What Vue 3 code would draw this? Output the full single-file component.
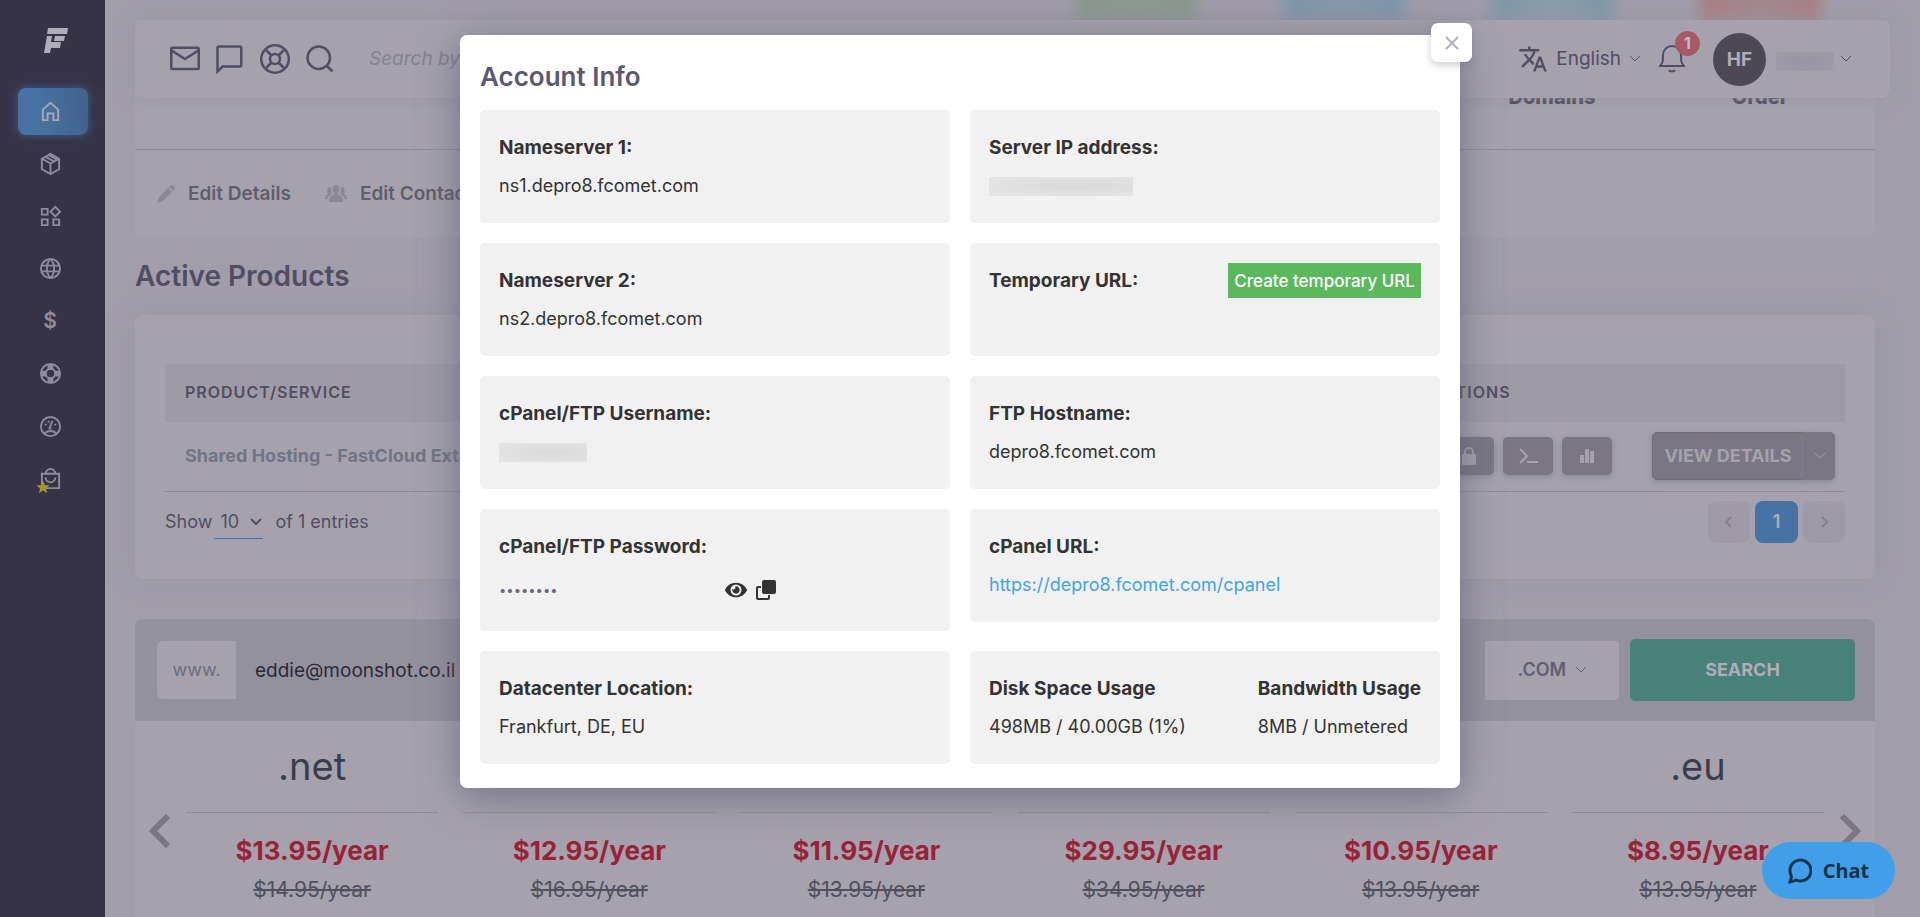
<template>
  <div class="app">
    <nav class="sidebar" aria-label="Main">
      <a href="#" class="logo" aria-label="Home page">
        <svg viewBox="0 0 24 25" width="24" height="25"><path d="M4 0h20l-1 6H3zM3 8h5l-1 6h10l-1 6H7l-1 5H0zM11 8h10l-1 5H10z"/></svg>
      </a>
      <ul>
        <li v-for="item in menu" :key="item.name">
          <a href="#" :class="{ active: item.name === 'home' }" :aria-label="item.name">
            <span v-if="item.sign" class="sign">{{ item.sign }}</span>
            <svg v-else viewBox="0 0 24 24" width="23" height="23"><path v-for="d in item.paths" :key="d" :d="d"/></svg>
            <svg v-if="item.star" class="star" viewBox="0 0 24 24" width="14" height="14"><path d="M12 1l3.200 7.500 8 .7-6 5.300 1.800 8L12 18l-7 4.500 1.800-8-6-5.300 8-.7z"/></svg>
          </a>
        </li>
      </ul>
    </nav>

    <header class="topbar">
      <div class="shortcuts">
        <button v-for="s in shortcuts" :key="s.name" :aria-label="s.name">
          <svg viewBox="0 0 24 24" width="30" height="30"><path v-for="d in s.paths" :key="d" :d="d"/></svg>
        </button>
      </div>
      <input class="search" type="text" placeholder="Search by" aria-label="Search" />
      <div class="user">
        <button class="lang">
          <svg class="translate" viewBox="0 0 24 24" width="30" height="30"><path d="M12.870 15.070l-2.540-2.510.03-.03c1.740-1.940 2.980-4.170 3.710-6.530H17V4h-7V2H8v2H1v1.990h11.170C11.500 7.920 10.440 9.750 9 11.350 8.070 10.320 7.300 9.190 6.690 8h-2c.73 1.630 1.730 3.170 2.980 4.560l-5.090 5.020L4 19l5-5 3.110 3.110.76-2.040zM18.500 10h-2L12 22h2l1.120-3h4.750L21 22h2l-4.500-12zm-2.620 7l1.620-4.330L19.120 17h-3.240z"/></svg>
          <span>English</span>
          <svg class="chev" viewBox="0 0 12 8" width="12" height="8"><path d="M1 1l5 5 5-5"/></svg>
        </button>
        <button class="bell" aria-label="Notifications">
          <svg viewBox="0 0 26 28" width="26" height="28"><path d="M1 21c3-3 3-5 3-11a9 9 0 0 1 18 0c0 6 0 8 3 11zM10 25c1 2 5 2 6 0"/></svg>
          <span class="badge">1</span>
        </button>
        <button class="account" aria-label="Account">
          <span class="avatar">HF</span>
          <span class="hidden-name"></span>
          <svg class="chev" viewBox="0 0 12 8" width="12" height="8"><path d="M1 1l5 5 5-5"/></svg>
        </button>
      </div>
    </header>

    <main>
      <section class="overview">
        <div class="stats">
          <div v-for="s in stats" :key="s.tone" class="stat">
            <span class="tile" :class="s.tone"></span>
            <strong>{{ s.label }}</strong>
          </div>
        </div>
        <div class="edit-links">
          <a href="#">
            <svg viewBox="0 0 18 18" width="18" height="18"><path d="M0 18l2-6 9-9 4 4-9 9zM12 2l2-2h2l2 2v2l-2 2z"/></svg>
            Edit Details
          </a>
          <a href="#">
            <svg viewBox="0 0 22 17" width="22" height="17"><path d="M11 0c5 0 4 8 1 9 4 1 6 3 6 8H4c0-5 2-7 6-8-3-1-4-9 1-9zM5 2c2 0 1 5 2 7-3 2-4 3-4 5H0c0-3 1-4 3-5-1-2-1-7 2-7zM17 2c-2 0-1 5-2 7 3 2 4 3 4 5h3c0-3-1-4-3-5 1-2 1-7-2-7z"/></svg>
            Edit Contacts
          </a>
        </div>
      </section>

      <h2>Active Products</h2>

      <section class="products">
        <table>
          <thead>
            <tr>
              <th>Product/Service</th>
              <th class="actions-col">Actions</th>
            </tr>
          </thead>
          <tbody>
            <tr>
              <td><a href="#">Shared Hosting - FastCloud Extra</a></td>
              <td class="actions-col">
                <div class="actions">
                  <button class="tool" aria-label="Password">
                    <svg viewBox="0 0 16 18" width="16" height="18"><path d="M2 7h12l1 1v9l-1 1H2l-1-1V8z"/><path class="line" d="M4 8V5a4 4 0 0 1 8 0v3"/></svg>
                  </button>
                  <button class="tool" aria-label="Terminal">
                    <svg viewBox="0 0 20 16" width="20" height="16"><path class="line" d="M2 1l7 7-7 7M9 14h11"/></svg>
                  </button>
                  <button class="tool" aria-label="Statistics">
                    <svg viewBox="0 0 16 16" width="16" height="16"><path d="M1 7h4v8H1zM6 1h4v14H6zM11 3h4v12h-4z"/></svg>
                  </button>
                  <button class="details">VIEW DETAILS</button>
                  <button class="more" aria-label="More actions">
                    <svg viewBox="0 0 12 8" width="12" height="8"><path d="M1 1l5 5 5-5"/></svg>
                  </button>
                </div>
              </td>
            </tr>
          </tbody>
        </table>
        <div class="paging">
          <label class="entries">
            Show
            <span class="select-wrap">
              <select v-model="pageSize"><option>10</option><option>25</option></select>
              <svg viewBox="0 0 12 8" width="12" height="8"><path d="M1 1l5 5 5-5"/></svg>
            </span>
          </label>
          <span class="total">of 1 entries</span>
          <div class="pages">
            <button aria-label="Previous"><svg viewBox="0 0 8 12" width="8" height="12"><path d="M6 1L1 6l5 5"/></svg></button>
            <button class="current">1</button>
            <button aria-label="Next"><svg viewBox="0 0 8 12" width="8" height="12"><path d="M2 1l5 5-5 5"/></svg></button>
          </div>
        </div>
      </section>

      <section class="domains">
        <form class="domain-search" @submit.prevent>
          <label class="www" for="domain">www.</label>
          <input id="domain" v-model="domain" type="text" />
          <div class="tld">
            <select v-model="tld" aria-label="Extension"><option>.COM</option><option>.NET</option></select>
            <svg viewBox="0 0 12 8" width="12" height="8"><path d="M1 1l5 5 5-5"/></svg>
          </div>
          <button type="submit">SEARCH</button>
        </form>
        <div class="carousel">
          <button aria-label="Previous"><svg viewBox="0 0 22 36" width="22" height="36"><path d="M19 3L4 18l15 15"/></svg></button>
          <ul>
            <li v-for="p in prices" :key="p.now">
              <h3>{{ p.ext }}</h3>
              <strong>{{ p.now }}/year</strong>
              <del>{{ p.old }}/year</del>
            </li>
          </ul>
          <button aria-label="Next"><svg viewBox="0 0 22 36" width="22" height="36"><path d="M3 3l15 15L3 33"/></svg></button>
        </div>
      </section>
    </main>

    <div class="backdrop">
      <div class="modal" role="dialog" aria-labelledby="modal-title">
        <button class="close" aria-label="Close">
          <svg viewBox="0 0 14 14" width="14" height="14"><path d="M1 1l12 12M13 1L1 13"/></svg>
        </button>
        <h1 id="modal-title">Account Info</h1>
        <div class="info">
          <div class="box">
            <strong>Nameserver 1:</strong>
            <p>ns1.depro8.fcomet.com</p>
          </div>
          <div class="box">
            <strong>Server IP address:</strong>
            <p><span class="blurred ip"></span></p>
          </div>
          <div class="box">
            <strong>Nameserver 2:</strong>
            <p>ns2.depro8.fcomet.com</p>
          </div>
          <div class="box temp">
            <strong>Temporary URL:</strong>
            <button>Create temporary URL</button>
          </div>
          <div class="box">
            <strong>cPanel/FTP Username:</strong>
            <p><span class="blurred"></span></p>
          </div>
          <div class="box">
            <strong>FTP Hostname:</strong>
            <p>depro8.fcomet.com</p>
          </div>
          <div class="box">
            <label for="password">cPanel/FTP Password:</label>
            <div class="password">
              <input id="password" :type="showPassword ? 'text' : 'password'" value="password" readonly />
              <button aria-label="Show password" @click="showPassword = !showPassword">
                <svg viewBox="0 0 576 512" width="22" height="20"><path d="M572.520 241.400C518.290 135.590 410.930 64 288 64S57.680 135.640 3.480 241.410a32.350 32.350 0 0 0 0 29.190C57.710 376.410 165.070 448 288 448s230.320-71.640 284.520-177.410a32.350 32.350 0 0 0 0-29.190zM288 400a144 144 0 1 1 144-144 143.930 143.930 0 0 1-144 144zm0-240a95.310 95.310 0 0 0-25.310 3.790 47.850 47.850 0 0 1-66.900 66.900A95.780 95.780 0 1 0 288 160z"/></svg>
              </button>
              <button aria-label="Copy password">
                <svg viewBox="0 0 20 20" width="20" height="20"><path d="M8 0h10a2 2 0 0 1 2 2v10a2 2 0 0 1-2 2H8a2 2 0 0 1-2-2V2a2 2 0 0 1 2-2zM2 6h3v2H2v10h10v-3h2v3a2 2 0 0 1-2 2H2a2 2 0 0 1-2-2V8a2 2 0 0 1 2-2z"/></svg>
              </button>
            </div>
          </div>
          <div class="box">
            <strong>cPanel URL:</strong>
            <p><a href="https://depro8.fcomet.com/cpanel">https://depro8.fcomet.com/cpanel</a></p>
          </div>
          <div class="box">
            <strong>Datacenter Location:</strong>
            <p>Frankfurt, DE, EU</p>
          </div>
          <div class="box usage">
            <div>
              <strong>Disk Space Usage</strong>
              <p>498MB / 40.00GB (1%)</p>
            </div>
            <div>
              <strong>Bandwidth Usage</strong>
              <p>8MB / Unmetered</p>
            </div>
          </div>
        </div>
      </div>
    </div>

    <button class="chat">
      <svg viewBox="0 0 24 26" width="24" height="26"><path d="M3 17a10.500 10.500 0 1 1 5 5c-2 1-4 2-6 2 1-2 2-4 1-7z"/></svg>
      Chat
    </button>
  </div>
</template>

<script setup>
import { ref } from 'vue'

const showPassword = ref(false)
const pageSize = ref('10')
const domain = ref('eddie@moonshot.co.il')
const tld = ref('.COM')

const menu = [
  { name: 'home', paths: ['M4 21V10l8-7 8 7v11h-5v-7H9v7z'] },
  { name: 'products', paths: ['M12 2l9 5v11l-9 5-9-5V7z', 'M3 7l9 5 9-5M12 12v11M7 5l9 5M10 3l9 5'] },
  { name: 'services', paths: ['M3 4h6v6H3zM3 15h6v6H3zM15 15h6v6h-6zM17 2l5 5-5 5-5-5z'] },
  { name: 'domains', paths: ['M12 2a10 10 0 1 0 0 20 10 10 0 0 0 0-20z', 'M12 2c-5 5-5 15 0 20M12 2c5 5 5 15 0 20M3 9h18M3 15h18'] },
  { name: 'billing', sign: '$' },
  { name: 'support', paths: ['M12 2a10 10 0 1 0 0 20 10 10 0 0 0 0-20z', 'M12 7a5 5 0 1 0 0 10 5 5 0 0 0 0-10z', 'M12 3v5M12 16v5M3 12h5M16 12h5M10 3v5M14 3v5M10 16v5M14 16v5M3 10h5M3 14h5M16 10h5M16 14h5'] },
  { name: 'performance', paths: ['M12 2a10 10 0 1 0 0 20 10 10 0 0 0 0-20z', 'M11 14l3-8M13 14h-3M6 10h2M9 7h2M16 10h2M6 19c3-3 9-3 12 0'] },
  { name: 'marketplace', star: true, paths: ['M3 7h18v15H3z', 'M7 7a5 5 0 0 1 10 0M7 11a5 5 0 0 0 10 0'] },
]

const shortcuts = [
  { name: 'Mail', paths: ['M2 3h20a1 1 0 0 1 1 1v15a1 1 0 0 1-1 1H2a1 1 0 0 1-1-1V4a1 1 0 0 1 1-1z', 'M1 5l11 7 11-7'] },
  { name: 'Messages', paths: ['M3 2h17a1 1 0 0 1 1 1v14a1 1 0 0 1-1 1H6l-4 4V3a1 1 0 0 1 1-1z'] },
  { name: 'Help', paths: ['M12 1a11 11 0 1 0 0 22 11 11 0 0 0 0-22z', 'M12 8a4 4 0 1 0 0 8 4 4 0 0 0 0-8z', 'M5 5l4 4M15 15l4 4M19 5l-4 4M9 15l-4 4'] },
  { name: 'Find', paths: ['M11 2a9 9 0 1 0 0 18 9 9 0 0 0 0-18z', 'M17 17l5 5'] },
]

const stats = [
  { tone: 'green', label: '' },
  { tone: 'blue', label: '' },
  { tone: 'teal', label: 'Domains' },
  { tone: 'red', label: 'Order' },
]

const prices = [
  { ext: '.net', now: '$13.95', old: '$14.95' },
  { ext: '', now: '$12.95', old: '$16.95' },
  { ext: '', now: '$11.95', old: '$13.95' },
  { ext: '', now: '$29.95', old: '$34.95' },
  { ext: '', now: '$10.95', old: '$13.95' },
  { ext: '.eu', now: '$8.95', old: '$13.95' },
]
</script>

<style>
body { margin: 0; background: #a19dab; overflow: hidden; }
</style>

<style scoped>
* { box-sizing: border-box; }
.app { height: 100vh; overflow: hidden; display: flex; font-family: Inter, "Liberation Sans", sans-serif; font-size: 18px; line-height: 26px; color: #524d63; }
button, input, select { font: inherit; color: inherit; border: 0; background: none; padding: 0; margin: 0; outline: 0; }
button { display: flex; align-items: center; justify-content: center; }
select { appearance: none; }
ul { list-style: none; margin: 0; padding: 0; }
h1, h2, h3, p { margin: 0; }
a { color: inherit; text-decoration: none; }
svg { flex: none; fill: none; stroke: currentColor; stroke-width: 2; }

.sidebar { flex: none; width: 105px; background: #373347; color: #8f8b9a; }
.logo { display: flex; justify-content: center; padding: 28px 0 35px 6px; color: #b0adb8; }
.logo svg { fill: currentColor; stroke: none; }
.sidebar ul { height: 414px; padding: 0 17px 0 18px; display: flex; flex-direction: column; justify-content: space-between; }
.sidebar li a { position: relative; display: flex; align-items: center; justify-content: center; height: 47px; padding-right: 6px; border-radius: 8px; }
.sidebar li a.active { background: linear-gradient(80deg, #4673a3 30%, #42608a); box-shadow: 0 0 10px #42618b; color: #a9a6b2; }
.sign { font-size: 21px; font-weight: 600; }
.sidebar .star { position: absolute; left: 18px; bottom: 8px; fill: #a8902f; stroke: none; }

.topbar { position: absolute; z-index: 2; left: 135px; right: 30px; top: 20px; height: 78px; padding: 0 35px; display: flex; align-items: center; background: #a5a2ad; border-radius: 8px; box-shadow: 0 0 20px #9995a3; }
.shortcuts { display: flex; gap: 15px; }
.search { flex: 1; margin-left: 34px; font-size: 19px; font-style: italic; }
.search::placeholder { color: #85818f; opacity: 1; }
.user, .lang, .account { display: flex; align-items: center; }
.translate { fill: currentColor; stroke: none; margin-right: 8px; }
.lang { font-size: 19px; }
.chev { stroke-width: 1; }
.lang .chev { margin-left: 8px; }
.bell { position: relative; margin: 0 28px 0 18px; }
.badge { position: absolute; left: 16px; top: -14px; width: 25px; height: 25px; border-radius: 50%; background: #a65a67; color: #c4bcc5; font-size: 16px; line-height: 25px; font-weight: 700; }
.avatar { width: 53px; height: 53px; border-radius: 50%; background: #4c4854; color: #b0adb8; font-size: 19px; font-weight: 700; line-height: 53px; }
.hidden-name { width: 58px; height: 19px; margin: 4px 6px 0 10px; background: radial-gradient(#9793a3, #a09ca9); }
.account { padding-right: 3px; }

main { flex: 1; min-width: 0; padding-right: 45px; padding-left: 30px; }
.overview { height: 237px; background: linear-gradient(#a19dab 20px, #a5a2ad 20px); border-radius: 0 0 8px 8px; }
.stats { height: 150px; padding-right: 11px; display: flex; justify-content: flex-end; border-bottom: 1px solid #8f8b9a; }
.stat { width: 208px; display: flex; flex-direction: column; align-items: center; gap: 64px; color: #3c3947; font-size: 20px; }
.stat strong { font-weight: 800; }
.tile { width: 144px; height: 20px; }
.green { background: linear-gradient(90deg, #a19dab, #8a998e 15%, #8f9a90 50%, #8a998e 85%, #a19dab); }
.blue { background: linear-gradient(90deg, #a19dab, #7f96ae 15%, #8899aa 50%, #7f96ae 85%, #a19dab); }
.teal { background: linear-gradient(90deg, #a19dab, #7e98a4 15%, #8f9ca9 50%, #7e98a4 85%, #a19dab); }
.red { background: linear-gradient(90deg, #a19dab, #a77f84 15%, #a3888e 50%, #a77f84 85%, #a19dab); }
.edit-links { display: flex; gap: 34px; height: 87px; padding-left: 22px; align-items: center; font-size: 19px; font-weight: 600; color: #615d6b; }
.edit-links a { display: flex; align-items: center; gap: 13px; }
.edit-links svg { fill: #8b8794; stroke: none; }
h2 { padding: 21px 0; font-size: 28px; line-height: 36px; font-weight: 600; }

.products { height: 264px; padding: 49px 30px 0; background: #a5a2ad; border-radius: 8px; box-shadow: 0 0 25px #9a96a5; }
table { width: 100%; border-collapse: collapse; table-layout: fixed; }
th { height: 58px; padding: 0 20px 2px; background: #9e9ba6; text-align: left; text-transform: uppercase; font-size: 16px; font-weight: 600; letter-spacing: 1px; line-height: 20px; }
td { height: 69px; padding: 0 20px; border-bottom: 1px solid #8f8b9a; font-size: 18px; font-weight: 700; color: #717485; white-space: nowrap; }
.actions-col { width: 434px; }
td.actions-col { padding: 0 10px; }
.actions { display: flex; align-items: center; justify-content: flex-end; gap: 9px; color: #a5a2ad; }
.actions button { background: #7a7684; border-radius: 5px; box-shadow: 0 2px 6px #8b8796; }
.actions .tool { width: 50px; height: 38px; }
.tool svg { fill: currentColor; stroke: none; }
.tool svg .line { fill: none; stroke: currentColor; }
.actions .details { width: 152px; height: 48px; margin: 0 -9px 0 31px; border: 1px solid #6f6b79; border-radius: 5px 0 0 5px; font-weight: 700; white-space: nowrap; }
.actions .more { width: 31px; height: 48px; border-radius: 0 5px 5px 0; }
.more svg { stroke-width: 1; }
.paging { display: flex; align-items: center; height: 61px; }
.entries { display: flex; align-items: center; gap: 2px; }
.select-wrap { display: flex; align-items: center; height: 34px; width: 49px; padding-left: 6px; gap: 8px; border-bottom: 1px solid #4673a3; }
.total { margin-left: 12px; }
.pages { display: flex; gap: 5px; margin-left: auto; }
.pages button { width: 42px; height: 42px; border-radius: 8px; background: #9e9ba6; color: #85818f; }
.pages .current { width: 43px; background: #4673a3; color: #b0adb8; font-weight: 600; }

.domains { margin-top: 40px; min-height: 100vh; background: #a5a2ad; border-radius: 8px 8px 0 0; }
.domain-search { display: flex; align-items: center; height: 102px; padding: 0 20px 0 22px; background: #94919e; border-radius: 8px 8px 0 0; }
.www { width: 79px; height: 58px; line-height: 58px; text-align: center; background: #a5a2ad; border-radius: 6px 0 0 6px; color: #6f6b7b; }
.domain-search input { flex: 1; min-width: 0; height: 58px; padding-left: 19px; font-size: 19px; color: #2c2937; }
.tld { display: flex; align-items: center; justify-content: center; gap: 8px; width: 134px; height: 59px; margin-right: 11px; background: #a5a2ad; border-radius: 0 4px 4px 0; font-weight: 600; color: #625e70; }
.tld svg { stroke-width: 1; }
.domain-search button { width: 225px; height: 62px; border-radius: 5px; background: #48807a; color: #b0adb8; font-weight: 700; }
.carousel { display: flex; align-items: flex-start; padding: 0 14px; color: #7a7684; }
.carousel button { flex: none; margin-top: 92px; }
.carousel svg { stroke-width: 6; }
.carousel ul { flex: 1; display: grid; grid-template-columns: repeat(6, 1fr); gap: 25px; padding: 0 15px; }
.carousel li { display: flex; flex-direction: column; align-items: center; }
.carousel h3 { width: 100%; height: 92px; line-height: 90px; border-bottom: 1px solid #8f8b9a; text-align: center; font-size: 38px; font-weight: 400; color: #3b3d4d; }
.carousel strong { margin-top: 20px; font-size: 26px; line-height: 36px; color: #992238; }
.carousel del { margin-top: 7px; font-size: 21px; line-height: 28px; color: #50505f; }

.backdrop { position: absolute; z-index: 3; inset: 0; padding-top: 35px; }
.modal { position: relative; width: 1000px; margin: 0 auto; padding: 24px 20px; background: #fff; border-radius: 7px; box-shadow: 0 8px 40px #5d586fb0; color: #333; }
.modal h1 { margin-bottom: 15px; font-size: 26px; line-height: 36px; font-weight: 600; color: #5c586e; }
.close { position: absolute; right: -12px; top: -12px; width: 41px; height: 39px; background: #fff; border-radius: 7px; box-shadow: 0 3px 8px #5d586f50; color: #b4b1bc; }
.info { display: grid; grid-template-columns: 1fr 1fr; gap: 20px; align-items: start; }
.box { min-height: 113px; padding: 25px 19px 24px; background: #f1f1f1; border-radius: 5px; }
.box strong, .box label { display: block; font-size: 19px; font-weight: 700; }
.box p { min-height: 26px; margin-top: 12px; display: flex; align-items: center; }
.box p a { color: #43a3ea; }
.blurred { width: 88px; height: 19px; background: radial-gradient(ellipse at 60% 50%, #d8d8d8, #e4e4e4 80%); }
.blurred.ip { width: 144px; }
.box.temp, .usage { display: flex; justify-content: space-between; align-items: flex-start; }
.box.temp { padding-top: 20px; }
.temp strong { margin-top: 5px; }
.temp button { height: 35px; padding: 0 6px; background: #5cb85c; color: #fff; font-size: 17px; font-weight: 500; }
.password { display: flex; align-items: center; height: 35px; margin-top: 12px; gap: 9px; }
.password input { width: 217px; font-size: 13px; color: #6c687e; }
.password svg { fill: currentColor; stroke: none; }

.chat { position: absolute; z-index: 4; right: 25px; bottom: 18px; width: 133px; height: 57px; gap: 11px; border-radius: 29px; background: #409fe8; color: #17344b; font-family: "Noto Sans", sans-serif; font-size: 20px; font-weight: 700; }
.chat svg { stroke-width: 3; }
</style>
